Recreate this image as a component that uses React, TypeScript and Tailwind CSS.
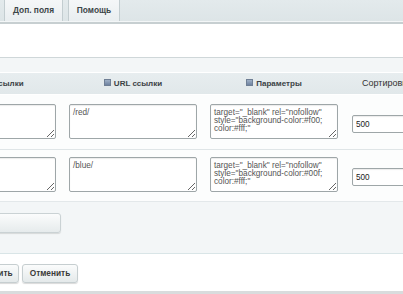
import React from 'react';

// Small info square used before column titles
function HintIcon() {
  return (
    <span className="inline-block w-[7px] h-[7px] mr-[3px] align-[-0.5px] border border-[#6f7f95] bg-gradient-to-b from-[#9fb0c6] to-[#6e82a0]" />
  );
}

interface LinkRow {
  url: string;
  params: string;
  sort: string;
}

const rows: LinkRow[] = [
  {
    url: '/red/',
    params: 'target="_blank" rel="nofollow" style="background-color:#f00; color:#fff;"',
    sort: '500',
  },
  {
    url: '/blue/',
    params: 'target="_blank" rel="nofollow" style="background-color:#00f; color:#fff;"',
    sort: '500',
  },
];

const areaCls =
  'block w-[128px] h-[35px] px-[3px] pt-[4px] border border-[#9ea6a8] rounded-[2px] bg-white text-[8.2px] leading-[8.2px] text-[#555] shadow-[inset_0_1px_1px_rgba(0,0,0,0.08)] outline-none';

export default function App() {
  return (
    <div className="w-[403px] h-[294px] overflow-hidden bg-white" style={{ fontFamily: '"Liberation Sans", Arial, sans-serif' }}>
      {/* Tabs */}
      <div className="h-[21px] bg-gradient-to-b from-[#e3eaec] to-[#dde5e7] flex items-end pl-[4px] gap-[5px] text-[8.4px] font-bold text-[#3c4648]">
        <div className="h-[21px] w-[59px] flex items-center justify-center border-x border-[#c3cdd0] bg-gradient-to-b from-[#f5f7f8] to-[#e9eef0]">
          Доп. поля
        </div>
        <div className="h-[21px] w-[52px] flex items-center justify-center border-x border-[#c3cdd0] bg-gradient-to-b from-[#f5f7f8] to-[#e9eef0]">
          Помощь
        </div>
      </div>
      <div className="h-[1px] bg-[#f3f6f7]" />
      <div className="h-[2px] bg-[#c7cfd1]" />

      {/* blank area */}
      <div className="h-[34px] bg-white border-b border-[#cfd7d9]" />
      <div className="h-[14px] bg-[#f3f6f7]" />

      {/* table */}
      <div className="ml-[-72px] w-[520px]">
        <div className="flex h-[23px] items-center bg-gradient-to-b from-[#e7edef] to-[#e1e8ea] border-t border-white border-b border-[#cdd6d8] text-[8px] font-bold text-[#3b4245]">
          <div className="w-[141px] pr-[13px] text-center"><HintIcon />Текст ссылки</div>
          <div className="w-[141px] pr-[13px] text-center"><HintIcon />URL ссылки</div>
          <div className="w-[141px] pr-[13px] text-center"><HintIcon />Параметры</div>
          <div className="pl-[11px] font-normal text-[9px] text-[#333]">Сортировка</div>
        </div>

        {rows.map((r, i) => (
          <div
            key={i}
            className={`flex items-center bg-[#fcfdfd] border-b ${i === 0 ? 'pt-[9px] pb-[10px] border-[#dfe5e7]' : 'pt-[7px] pb-[9px] border-[#e3e8ea]'}`}
          >
            <div className="w-[141px]">
              <textarea readOnly defaultValue="" className={areaCls} />
            </div>
            <div className="w-[141px]">
              <textarea readOnly defaultValue={r.url} className={areaCls} />
            </div>
            <div className="w-[141px]">
              <textarea readOnly defaultValue={r.params} className={areaCls} />
            </div>
            <div className="pl-[1px]">
              <input
                readOnly
                defaultValue={r.sort}
                className="w-[70px] h-[18px] px-[3px] border border-[#9ea6a8] rounded-[2px] bg-white text-[8.2px] text-[#222] outline-none shadow-[inset_0_1px_1px_rgba(0,0,0,0.08)]"
              />
            </div>
          </div>
        ))}
      </div>

      {/* add more */}
      <div className="h-[52px] bg-[#f3f6f7] border-b border-[#d9e5e7] pt-[11px]">
        <div className="ml-[-40px] w-[101px] h-[20px] rounded-[3px] border border-[#cad2d4] bg-gradient-to-b from-[#fbfcfc] to-[#e6ebec] shadow-[0_1px_1px_rgba(0,0,0,0.12)]" />
      </div>

      {/* footer buttons */}
      <div className="h-[37px] bg-white flex items-start pt-[10px] gap-[3px] ml-[-40px] text-[8.3px] font-bold text-[#3a3a3a]">
        <button className="h-[19px] w-[59px] rounded-[3px] border border-[#c6ced0] bg-gradient-to-b from-[#fbfcfc] to-[#e4e9ea] shadow-[0_1px_1px_rgba(0,0,0,0.15)]">
          Применить
        </button>
        <button className="h-[19px] w-[56px] rounded-[3px] border border-[#c6ced0] bg-gradient-to-b from-[#fbfcfc] to-[#e4e9ea] shadow-[0_1px_1px_rgba(0,0,0,0.15)]">
          Отменить
        </button>
      </div>
      <div className="h-[3px] bg-[#d9dcdd]" />
    </div>
  );
}
